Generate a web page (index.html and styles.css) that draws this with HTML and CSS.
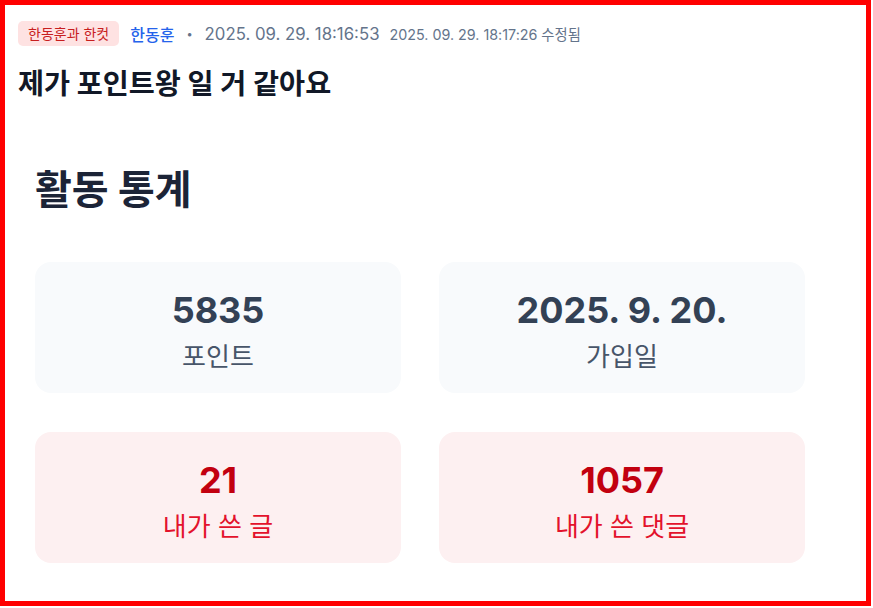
FILE: index.html
```html
<!DOCTYPE html>
<html lang="ko">
<head>
<meta charset="utf-8">
<title>활동 통계</title>
<link rel="stylesheet" href="styles.css">
</head>
<body>
<div class="frame">
  <div class="meta">
    <span class="badge">한동훈과 한컷</span>
    <span class="author">한동훈</span>
    <span class="dot">•</span>
    <span class="date">2025. 09. 29. 18:16:53</span>
    <span class="edited">2025. 09. 29. 18:17:26 수정됨</span>
  </div>
  <h1 class="title">제가 포인트왕 일 거 같아요</h1>
  <section class="stats">
    <h2 class="stats-title">활동 통계</h2>
    <div class="grid">
      <div class="card">
        <div class="num">5835</div>
        <div class="label">포인트</div>
      </div>
      <div class="card">
        <div class="num">2025. 9. 20.</div>
        <div class="label">가입일</div>
      </div>
      <div class="card red">
        <div class="num">21</div>
        <div class="label">내가 쓴 글</div>
      </div>
      <div class="card red">
        <div class="num">1057</div>
        <div class="label">내가 쓴 댓글</div>
      </div>
    </div>
  </section>
</div>
</body>
</html>
```
FILE: styles.css
```css
* { box-sizing: border-box; }
html, body { margin: 0; padding: 0; background: #fff; }
body {
  font-family: Inter, "Noto Sans CJK KR", sans-serif;
  color: #111827;
}
.frame {
  width: 871px;
  height: 606px;
  border: 5px solid #ff0000;
  padding: 16px 13px 0;
}
.meta {
  display: flex;
  align-items: center;
  height: 25px;
}
.badge {
  background: #fee2e2;
  color: #c81e1e;
  font-size: 14px;
  line-height: 25px;
  height: 25px;
  padding: 0 10px;
  border-radius: 5px;
}
.author {
  margin-left: 11px;
  color: #2563eb;
  font-size: 16px;
  font-weight: 500;
}
.dot {
  margin-left: 12px;
  color: #64748b;
  font-size: 11px;
}
.date {
  margin-left: 12px;
  color: #64748b;
  font-size: 16.8px;
}
.edited {
  margin-left: 10px;
  color: #64748b;
  font-size: 14.3px;
}
.title {
  margin: 20px 0 0;
  font-size: 28.3px;
  line-height: 36px;
  font-weight: 700;
  color: #111827;
}
.stats {
  padding: 64px 0 0 17px;
}
.stats-title {
  margin: 0;
  font-size: 40px;
  line-height: 48px;
  font-weight: 700;
  color: #1c2437;
}
.grid {
  margin-top: 48px;
  display: grid;
  grid-template-columns: 366px 366px;
  column-gap: 38px;
  row-gap: 39px;
}
.card {
  height: 131px;
  border-radius: 16px;
  background: #f8fafc;
  padding-top: 28px;
  text-align: center;
}
.num {
  font-size: 36px;
  line-height: 40px;
  font-weight: 700;
  color: #334155;
}
.label {
  margin-top: 11px;
  font-size: 26px;
  line-height: 32px;
  color: #475569;
}
.card.red { background: #fdf0f1; }
.card.red .num { color: #c2000f; }
.card.red .label { color: #e3122c; }
```
